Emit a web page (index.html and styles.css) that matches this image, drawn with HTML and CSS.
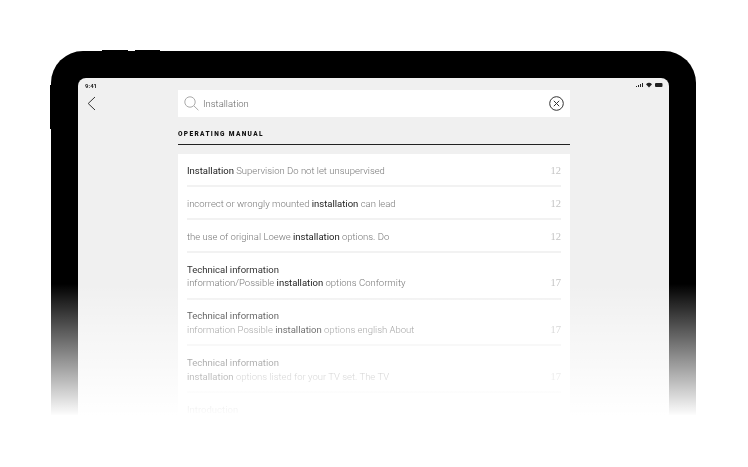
FILE: index.html
```html
<!DOCTYPE html>
<html lang="en">
<head>
    <meta charset="UTF-8">
    <title>Operating Manual Search</title>
    <link rel="stylesheet" href="styles.css">
</head>
<body>
    <div class="device">
        <span class="side-btn btn-top-a"></span>
        <span class="side-btn btn-top-b"></span>
        <span class="side-btn btn-left"></span>
        <div class="frame">
            <div class="screen">
                <div class="status-bar">
                    <span class="time">9:41</span>
                    <svg class="status-icons" width="27" height="6" viewBox="0 0 27 6">
                        <path d="M0 5h1V4H0zM2 5h1V3H2zM4 5h1V2H4zM6 5h1V1H6z" fill="#222"/>
                        <path d="M10 2.2a4.4 4.4 0 0 1 6 0L13 5.4z" fill="#222"/>
                        <rect x="19" y="1" width="7.5" height="4" rx="1" fill="#222"/>
                    </svg>
                </div>
                <div class="content">
                    <a class="back">
                        <svg width="9" height="15" viewBox="0 0 9 15"><path d="M8 1 1.2 7.5 8 14" fill="none" stroke="#333" stroke-width="1"/></svg>
                    </a>
                    <div class="main">
                        <div class="search">
                            <svg class="search-icon" width="15" height="15" viewBox="0 0 15 15"><circle cx="6" cy="6" r="5.2" fill="none" stroke="#aaa" stroke-width="1"/><path d="M9.8 9.8 14.4 14.2" stroke="#aaa" stroke-width="1"/></svg>
                            <span class="search-text">Installation</span>
                            <svg class="clear-icon" width="15" height="15" viewBox="0 0 15 15"><circle cx="7.5" cy="7.5" r="6.8" fill="none" stroke="#333" stroke-width="1"/><path d="M4.8 4.8l5.4 5.4M10.2 4.8l-5.4 5.4" stroke="#333" stroke-width="1"/></svg>
                        </div>
                        <h2 class="section-title">OPERATING MANUAL</h2>
                        <ul class="results">
                            <li class="row">
                                <div class="row-text"><p><b>Installation</b> Supervision Do not let unsupervised</p></div>
                                <span class="page">12</span>
                            </li>
                            <li class="row">
                                <div class="row-text"><p>incorrect or wrongly mounted <b>installation</b> can lead</p></div>
                                <span class="page">12</span>
                            </li>
                            <li class="row">
                                <div class="row-text"><p>the use of original Loewe <b>installation</b> options. Do</p></div>
                                <span class="page">12</span>
                            </li>
                            <li class="row">
                                <div class="row-text"><h3>Technical information</h3><p>information/Possible <b>installation</b> options Conformity</p></div>
                                <span class="page">17</span>
                            </li>
                            <li class="row">
                                <div class="row-text"><h3>Technical information</h3><p>information Possible <b>installation</b> options english About</p></div>
                                <span class="page">17</span>
                            </li>
                            <li class="row">
                                <div class="row-text"><h3>Technical information</h3><p><b>installation</b> options listed for your TV set. The TV</p></div>
                                <span class="page">17</span>
                            </li>
                            <li class="row">
                                <div class="row-text"><h3>Introduction</h3></div>
                            </li>
                        </ul>
                    </div>
                </div>
            </div>
        </div>
        <div class="fade"></div>
    </div>
</body>
</html>
```

FILE: styles.css
```css
html, body {
    margin: 0;
    height: 100%;
    background: #fff;
    overflow: hidden;
}
body {
    font-family: Roboto, "Liberation Sans", sans-serif;
    padding: 51px 52px 0 51px;
    box-sizing: border-box;
}
.device {
    position: relative;
    height: 364px;
}
.frame {
    height: 100%;
    box-sizing: border-box;
    padding: 27px 27px 0;
    background: #000;
    border-radius: 32px 32px 0 0;
    overflow: hidden;
}
.side-btn {
    position: absolute;
    background: #000;
}
.btn-top-a { left: 51px; top: -1px; width: 26px; height: 2px; }
.btn-top-b { left: 84px; top: -1px; width: 25px; height: 2px; }
.btn-left { left: -1px; top: 34px; width: 2px; height: 44px; }
.screen {
    height: 100%;
    background: #f0f0f0;
    border-radius: 8px 8px 0 0;
    overflow: hidden;
    filter: blur(0.3px);
}
.status-bar {
    display: flex;
    justify-content: space-between;
    align-items: center;
    box-sizing: border-box;
    height: 12px;
    padding: 2px 6px 0 7px;
}
.time {
    font-size: 6px;
    font-weight: 700;
    color: #222;
}
.content {
    display: flex;
}
.back {
    width: 100px;
    padding: 6px 0 0 9px;
    box-sizing: border-box;
}
.main {
    width: 392px;
}
.search {
    display: flex;
    align-items: center;
    height: 27px;
    padding: 0 6px;
    background: #fff;
}
.search-text {
    flex: 1;
    margin-left: 4px;
    font-size: 9.5px;
    font-weight: 300;
    color: #666;
}
.section-title {
    margin: 0;
    padding: 13px 0 6px;
    font-size: 6.5px;
    line-height: 8px;
    font-weight: 900;
    letter-spacing: 1.35px;
    color: #111;
    border-bottom: 1px solid #222;
}
.results {
    list-style: none;
    margin: 9px 0 0;
    padding: 0 9px;
    background: #fff;
}
.row {
    display: flex;
    justify-content: space-between;
    align-items: flex-end;
    padding: 9.5px 0 7.83px;
    border-bottom: 2px solid #f2f2f2;
    font-size: 9.5px;
    line-height: 13.67px;
}
.row:last-child { border-bottom: 0; }
.row-text h3 {
    margin: 0;
    font-size: 9.5px;
    line-height: 13.67px;
    font-weight: 400;
    color: #333;
}
.row-text p {
    margin: 0;
    font-weight: 300;
    color: #777;
}
.row-text b {
    font-weight: 400;
    color: #222;
}
.page {
    font-family: "Liberation Serif", serif;
    font-size: 10.5px;
    color: #c4c4c4;
}
.fade {
    position: absolute;
    left: -2px;
    right: -2px;
    bottom: -1px;
    height: 132px;
    background: linear-gradient(to bottom, rgba(255,255,255,0), #fff);
}
```
